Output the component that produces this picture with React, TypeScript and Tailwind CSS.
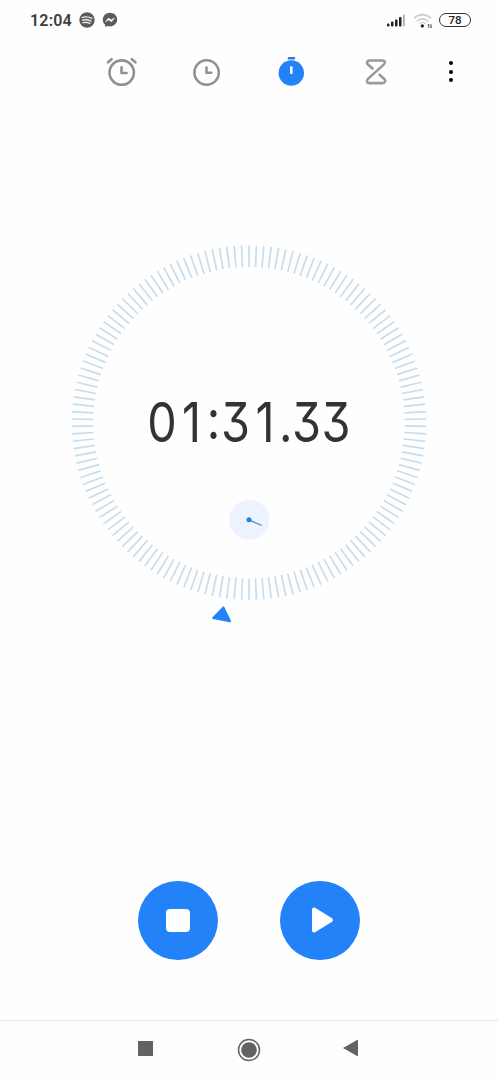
const TICK_COUNT = 150;

function StatusBar() {
    return (
        <div className="flex h-10 items-center justify-between pl-[30px] pr-[28px]">
            <div className="flex items-center">
                <span className="w-[42px] whitespace-nowrap pt-[2px] font-['Roboto',sans-serif] text-[16px] font-semibold leading-none tracking-[0.2px] text-[#3d3d3d]">
                    12:04
                </span>
                {/* Spotify */}
                <svg className="ml-[7px]" width="16" height="16" viewBox="0 0 16 16" fill="none">
                    <circle cx="8" cy="8" r="7.7" fill="#5c5c5c" />
                    <path d="M3.100 5.500c3.400-1 6.800-.7 9.900.9M3.500 8.200c3-.8 5.800-.5 8.500.9M4 10.700c2.400-.6 4.700-.4 6.900.7" stroke="#eee" strokeWidth="1.300" strokeLinecap="round" />
                </svg>
                {/* Messenger */}
                <svg className="ml-[7px]" width="16" height="16" viewBox="0 0 16 16">
                    <path d="M8 .8C3.900.8.8 3.700.8 7.700c0 2.100.9 3.900 2.300 5.100v2.200l2.200-1c.8.300 1.700.4 2.700.4 4.100 0 7.200-2.900 7.200-6.800S12.100.8 8 .8z" fill="#5c5c5c" />
                    <path d="M3.700 9.700 6.600 6l2.500 2 3.200-2-2.900 3.800-2.500-2z" fill="#fff" stroke="#fff" strokeWidth=".6" />
                </svg>
            </div>
            <div className="flex items-center">
                <svg width="18" height="13" viewBox="0 0 18 13">
                    <rect x="0" y="9.500" width="2.500" height="3" rx="1" fill="#222" />
                    <rect x="4" y="7.500" width="2.500" height="5" rx="1" fill="#222" />
                    <rect x="8" y="5.500" width="2.500" height="7" rx="1" fill="#222" />
                    <rect x="12" y="3" width="2.500" height="9.500" rx="1" fill="#222" />
                    <rect x="16" y=".5" width="1.700" height="12" rx=".8" fill="#aaa" />
                </svg>
                <svg className="ml-2" width="20" height="17" viewBox="0 0 20 17" fill="none">
                    <path d="M1 6.300a12 12 0 0 1 17 0M3.800 9.300a8 8 0 0 1 11.400 0" stroke="#d0d0d0" strokeWidth="1.900" />
                    <path d="M6.400 11.900a4.500 4.500 0 0 1 6.200 0" stroke="#ccc" strokeWidth="1.300" />
                    <circle cx="9.300" cy="13.900" r="1.700" fill="#222" />
                    <path d="M15.800 15.800v-3.600m-1 1 1-1M18 12.200v3.600m0 0 1-1" stroke="#333" strokeWidth=".9" />
                </svg>
                <div className="ml-[6px] mr-[-1px] flex h-[14px] w-[32px] items-center justify-center rounded-full border-[1.5px] border-[#333] pt-px font-['Roboto',sans-serif] text-[11.500px] font-medium leading-none text-[#222]">
                    78
                </div>
            </div>
        </div>
    );
}

function TabBar() {
    return (
        <nav className="flex h-[63px] items-center pl-[79px]">
            <button className="flex w-[85px] justify-center" aria-label="Alarm">
                <svg width="32" height="32" viewBox="0 0 32 32" fill="none" stroke="#919191" strokeWidth="2.600" strokeLinecap="round">
                    <circle cx="15.700" cy="16.600" r="12.200" />
                    <path d="M15.500 11.300v5.700h5" strokeLinejoin="round" />
                    <path d="M2 6.300l3.600-3.100M29.400 6.300l-3.600-3.100" />
                </svg>
            </button>
            <button className="flex w-[85px] justify-center" aria-label="Clock">
                <svg width="32" height="32" viewBox="0 0 32 32" fill="none" stroke="#919191" strokeWidth="2.600" strokeLinecap="round">
                    <circle cx="15.600" cy="16.500" r="12.200" />
                    <path d="M15.500 11.600v5.200h4.700" strokeLinejoin="round" />
                </svg>
            </button>
            <button className="flex w-[84px] justify-center" aria-label="Stopwatch">
                <svg width="32" height="32" viewBox="0 0 32 32">
                    <circle cx="16.300" cy="17" r="12.700" fill="#2382f7" />
                    <rect x="12.700" y="1" width="7.500" height="2.500" rx="1" fill="#3b7dca" />
                    <rect x="15" y="10.300" width="2.600" height="7.700" rx="1" fill="#fff" />
                </svg>
            </button>
            <button className="flex w-[85px] justify-center" aria-label="Timer">
                <svg width="32" height="32" viewBox="0 0 32 32" fill="none" stroke="#999" strokeWidth="2.600" strokeLinecap="round" strokeLinejoin="round">
                    <path d="M12.500 12.500 8.200 8.700C6 6.700 7 4.500 9.500 4.500h12.800c2.700 0 3.500 2.200 1.600 3.900L8 22.900c-2 1.800-1 4.200 1.500 4.200h13c2.700 0 3.600-2.400 1.500-4.300l-4.500-4" />
                </svg>
            </button>
            <button className="ml-[25px] flex h-8 w-4 flex-col items-center justify-center gap-[4.500px]" aria-label="More">
                <span className="h-[4px] w-[4px] rounded-full bg-black" />
                <span className="h-[4px] w-[4px] rounded-full bg-black" />
                <span className="h-[4px] w-[4px] rounded-full bg-black" />
            </button>
        </nav>
    );
}

// Fixed cells keep the readout from jumping as the digits change
function Readout({ value }: { value: string }) {
    return (
        <div className="absolute inset-x-0 top-[170.500px] flex scale-x-[0.85] justify-center whitespace-nowrap font-['Inter',sans-serif] text-[55px] leading-[56px] text-[#333] [font-feature-settings:'cv09','calt'_0]">
            {value.split('').map((char, i) => (
                <span
                    key={i}
                    className={`flex justify-center ${char === ':' ? 'w-[17px] -translate-y-[3px]' : char === '.' ? 'w-[14px]' : 'w-[34.7px]'}`}
                >
                    {char}
                </span>
            ))}
        </div>
    );
}

function Dial() {
    return (
        <div className="relative mx-auto h-[400px] w-[400px]">
            <svg width="400" height="400" viewBox="0 0 400 400">
                {Array.from({ length: TICK_COUNT }, (_, i) => (
                    <line
                        key={i}
                        x1="200"
                        y1="22.500"
                        x2="200"
                        y2="44"
                        stroke="#c8ddec"
                        strokeWidth="1.700"
                        transform={`rotate(${(i * 360) / TICK_COUNT} 200 199.700)`}
                    />
                ))}
                {/* seconds pointer */}
                <path d="M174.500 384.500 164.200 395 181 398.300z" fill="#2382f7" stroke="#2382f7" strokeWidth="2" strokeLinejoin="round" />
                {/* small dial */}
                <circle cx="200.300" cy="296.800" r="20" fill="#edf3fe" />
                <path d="M200 297l12.700 5.500" stroke="#5288bd" strokeWidth="1.300" />
                <circle cx="200" cy="296.700" r="2.500" fill="#2382d7" />
            </svg>
            <Readout value="01:31.33" />
        </div>
    );
}

function Controls() {
    return (
        <div className="flex gap-[62.500px] pl-[138.300px]">
            <button className="flex size-[79.500px] items-center justify-center rounded-full bg-[#2382f7]" aria-label="Stop">
                <span className="size-[23.500px] rounded-[4px] bg-white" />
            </button>
            <button className="flex size-[79.500px] items-center justify-center rounded-full bg-[#2382f7]" aria-label="Start">
                <svg width="32" height="32" viewBox="0 0 32 32">
                    <path d="M10 5.500v21L27 16z" fill="#fff" stroke="#fff" strokeWidth="4" strokeLinejoin="round" />
                </svg>
            </button>
        </div>
    );
}

function NavBar() {
    return (
        <div className="flex h-[60px] items-center border-t border-[#e6e6e6] pb-[2px] pl-[138px]">
            <span className="mb-[3px] size-[15px] bg-[#636363]" />
            <svg className="ml-[83.500px]" width="24" height="24" viewBox="0 0 24 24">
                <circle cx="12" cy="12" r="10.500" fill="none" stroke="#636363" strokeWidth="1.500" />
                <circle cx="12" cy="12" r="7.800" fill="#636363" />
            </svg>
            <svg className="mb-[3px] ml-[82px]" width="15" height="18" viewBox="0 0 15 18">
                <path d="M0 9 15 .5v17z" fill="#636363" />
            </svg>
        </div>
    );
}

export default function App() {
    return (
        <div className="flex h-[1080px] w-[498px] flex-col overflow-hidden bg-[#fefefe]">
            <StatusBar />
            <TabBar />
            <div className="mt-[120px]">
                <Dial />
            </div>
            <div className="mt-[257.500px]">
                <Controls />
            </div>
            <div className="mt-auto">
                <NavBar />
            </div>
        </div>
    );
}
